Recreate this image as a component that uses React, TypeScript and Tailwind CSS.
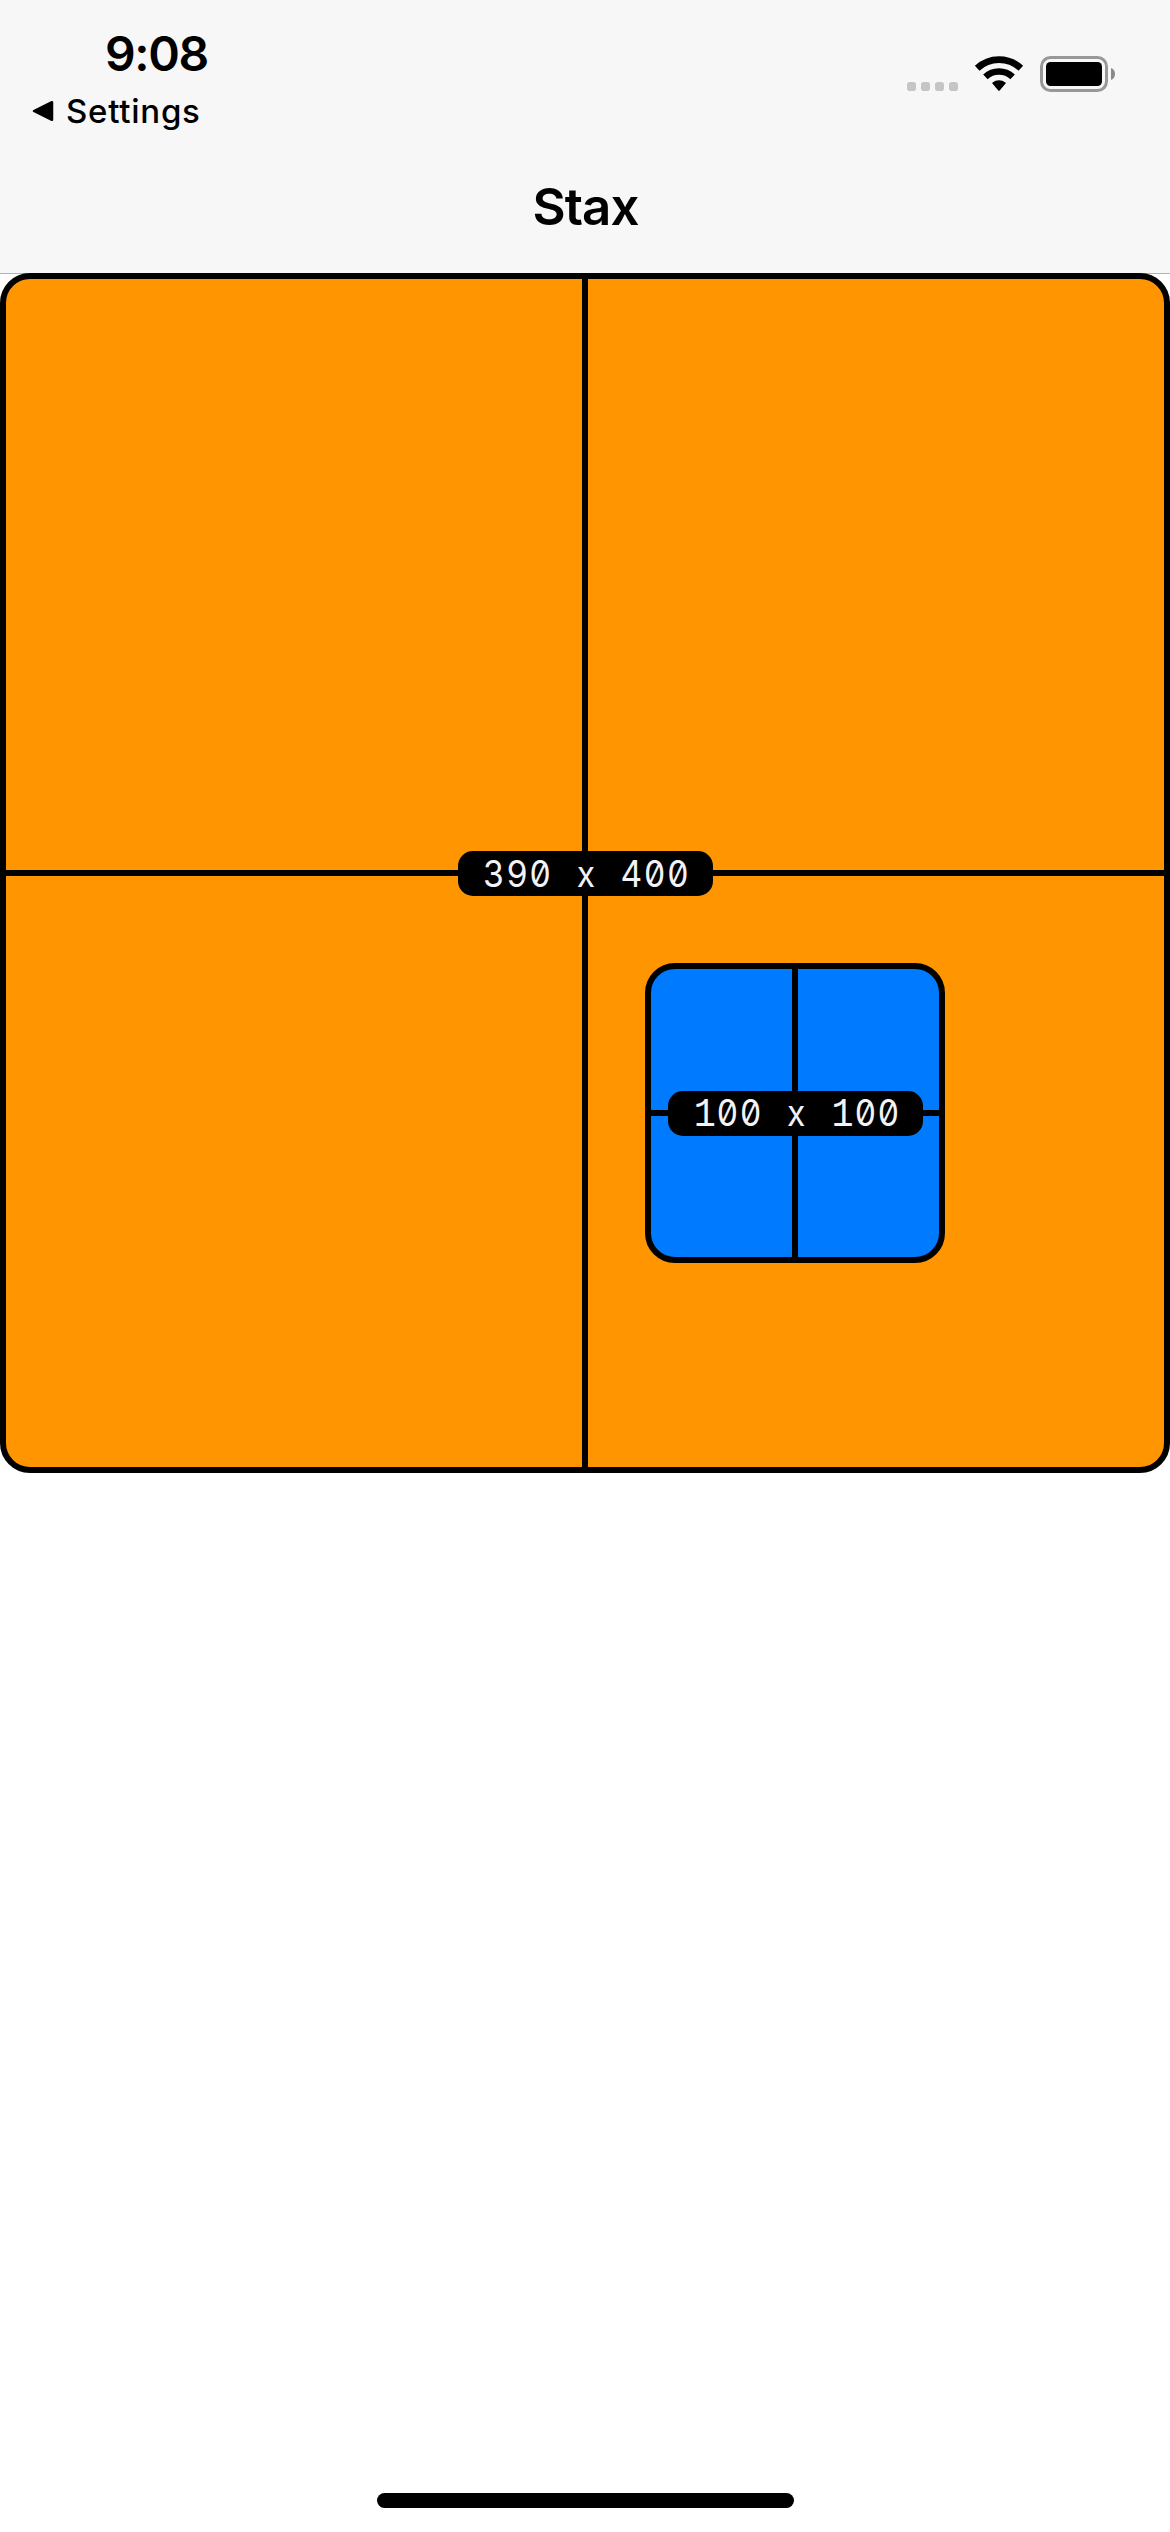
import type { ReactNode } from "react";

function Glyphs({ text }: { text: string }) {
  return (
    <span className="relative top-px left-px inline-block origin-center scale-x-[0.92] whitespace-pre font-['Inter',sans-serif] text-[36.5px] leading-[45px] tracking-[1.5px] [word-spacing:15px] [font-feature-settings:'tnum','zero']">
      {text.split("").map((c, i) =>
        c === "1" ? (
          <span key={i} className="inline-block w-[25.5px] text-center font-['Liberation_Mono',monospace] text-[40px] tracking-normal">
            1
          </span>
        ) : (
          c
        ),
      )}
    </span>
  );
}

function SizedBox({ label, className, children }: { label: string; className: string; children?: ReactNode }) {
  return (
    <div className={`relative grid shrink-0 place-items-center overflow-hidden rounded-[30px] border-6 border-black ${className}`}>
      <div className="absolute inset-y-0 left-1/2 w-1.5 -translate-x-1/2 bg-black" />
      <div className="absolute inset-x-0 top-1/2 h-1.5 -translate-y-1/2 bg-black" />
      <div className="relative top-[0.5px] left-[0.5px] flex h-[45px] w-[255px] items-center justify-center rounded-[15px] bg-black text-[#f2f2f7]">
        <Glyphs text={label} />
      </div>
      {children}
    </div>
  );
}

function StatusBar() {
  return (
    <div className="flex h-[141px] justify-between">
      <div className="flex flex-col pt-[28px] pl-8 text-black">
        <div className="pl-[73px] text-[48px] leading-[52px] font-semibold tracking-[-1.4px]">9:08</div>
        <div className="mt-[5px] flex items-center text-[33px] leading-[52px] font-medium tracking-[0.75px]">
          <svg className="mr-3 h-[22px] w-[22px]" viewBox="0 0 22 22">
            <path d="M2 11 20 2.2V19.8Z" fill="#000" stroke="#000" strokeWidth="2.5" strokeLinejoin="round" />
          </svg>
          <span>Settings</span>
        </div>
      </div>
      <svg className="mt-[50px] mr-[54px] h-[48px] w-[210px]" viewBox="0 0 210 48">
        <g fill="#c5c5c5">
          <rect x="1" y="32" width="9" height="9" rx="2.8" />
          <rect x="15" y="32" width="9" height="9" rx="2.8" />
          <rect x="29" y="32" width="9" height="9" rx="2.8" />
          <rect x="43" y="32" width="9" height="9" rx="2.8" />
        </g>
        <g fill="none" stroke="#000">
          <path d="M71.2 18.2A31.8 31.8 0 0 1 114.8 18.2" strokeWidth="6.8" />
          <path d="M79.4 26.8A20 20 0 0 1 106.6 26.8" strokeWidth="6.6" />
        </g>
        <path d="M86.4 33.6Q85.8 33 86.6 32.4A10.5 10.5 0 0 1 99.4 32.4Q100.2 33 99.6 33.6L93.7 40.4Q93 41.2 92.3 40.4Z" />
        <rect x="135.5" y="7.5" width="65" height="33" rx="9" fill="none" stroke="#989898" strokeWidth="3" />
        <rect x="140" y="12" width="56" height="24" rx="4.5" />
        <path d="M205 18Q209 19.5 209 24T205 30Z" fill="#898989" />
      </svg>
    </div>
  );
}

export default function App() {
  return (
    <div className="flex h-[2532px] w-[1170px] flex-col overflow-hidden bg-white font-['Inter',sans-serif]">
      <header className="h-[273px] shrink-0 bg-[#f7f7f7] shadow-[0_1px_0_#b2b2b2]">
        <StatusBar />
        <h1 className="h-[132px] pl-px text-center text-[51px] leading-[132px] font-semibold tracking-[-0.9px] text-black">Stax</h1>
      </header>
      <main className="flex-1">
        <SizedBox label="390 x 400" className="h-[1200px] w-[1170px] bg-[#ff9500]">
          <SizedBox label="100 x 100" className="absolute! top-[684px] left-[639px] h-[300px] w-[300px] bg-[#007aff]" />
        </SizedBox>
      </main>
      <footer className="flex h-[39px] justify-center">
        <div className="h-[15px] w-[417px] rounded-full bg-black" />
      </footer>
    </div>
  );
}
